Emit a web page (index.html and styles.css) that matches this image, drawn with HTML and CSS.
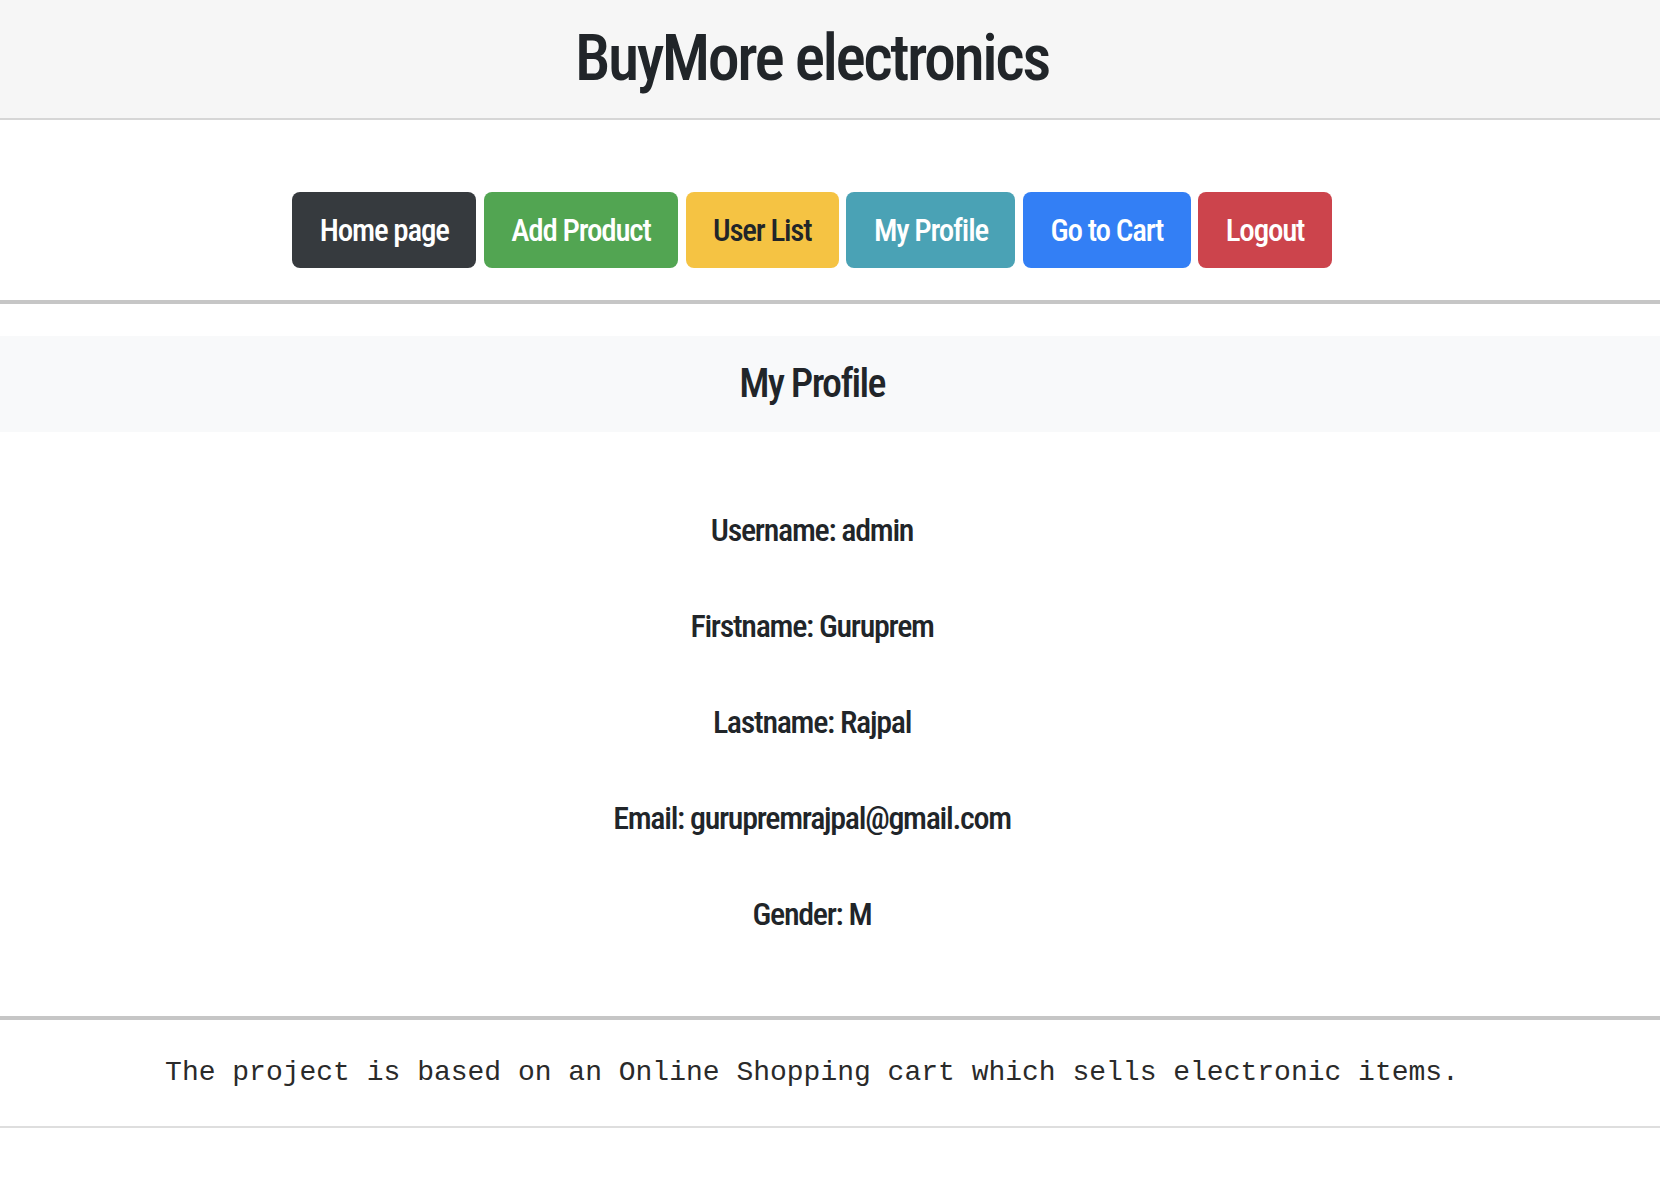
FILE: index.html
```html
<!DOCTYPE html>
<html lang="en">
<head>
<meta charset="utf-8">
<title>BuyMore electronics - My Profile</title>
<link rel="stylesheet" href="styles.css">
</head>
<body>
  <header class="site-header">
    <h1 class="site-title centered">BuyMore electronics</h1>
  </header>

  <nav class="main-nav centered">
    <a class="btn btn-dark" href="#">Home page</a>
    <a class="btn btn-success" href="#">Add Product</a>
    <a class="btn btn-warning" href="#">User List</a>
    <a class="btn btn-info" href="#">My Profile</a>
    <a class="btn btn-primary" href="#">Go to Cart</a>
    <a class="btn btn-danger" href="#">Logout</a>
  </nav>

  <hr class="rule">

  <section class="page-heading">
    <h2 class="page-title centered">My Profile</h2>
  </section>

  <main class="profile centered">
    <p class="profile-line">Username: admin</p>
    <p class="profile-line">Firstname: Guruprem</p>
    <p class="profile-line">Lastname: Rajpal</p>
    <p class="profile-line">Email: gurupremrajpal@gmail.com</p>
    <p class="profile-line">Gender: M</p>
  </main>

  <hr class="rule rule-bottom">

  <footer class="site-footer">
    <p class="footer-text centered">The project is based on an Online Shopping cart which sells electronic items.</p>
  </footer>
</body>
</html>
```

FILE: styles.css
```css
html, body {
  margin: 0;
  padding: 0;
  background: #ffffff;
}

body {
  font-family: "Roboto Condensed", "DejaVu Sans Condensed", "DejaVu Sans", sans-serif;
  font-stretch: condensed;
  font-weight: 500;
  color: #212529;
}

.centered {
  text-align: center;
  padding-right: 36px;
}

.site-header {
  background: #f6f6f6;
  border-bottom: 2px solid #d6d6d6;
  height: 118px;
}

.site-title {
  margin: 0;
  font-size: 64px;
  font-weight: 500;
  line-height: 118px;
  letter-spacing: -2.5px;
}

.main-nav {
  display: flex;
  justify-content: center;
  gap: 7.5px;
  padding-top: 72px;
}

.btn {
  display: inline-flex;
  align-items: center;
  height: 76px;
  padding: 0 27.5px;
  border-radius: 8px;
  font-size: 31px;
  letter-spacing: -1.2px;
  color: #ffffff;
  text-decoration: none;
  box-sizing: border-box;
}

.btn-dark { background: #363a3e; }
.btn-success { background: #52a552; }
.btn-warning { background: #f5c343; color: #212529; }
.btn-info { background: #4aa2b5; }
.btn-primary { background: #337ff5; }
.btn-danger { background: #cc444c; }

.rule {
  border: 0;
  height: 4px;
  background: #c6c6c6;
  margin: 32px 0 0;
}

.page-heading {
  background: #f8f9fa;
  height: 96px;
  margin-top: 32px;
}

.page-title {
  margin: 0;
  font-size: 40px;
  font-weight: 500;
  letter-spacing: -1.7px;
  line-height: 96px;
}

.profile {
  display: flex;
  flex-direction: column;
  align-items: center;
  padding-top: 50px;
  padding-bottom: 54px;
}

.profile-line {
  margin: 0;
  font-size: 32px;
  letter-spacing: -1.3px;
  line-height: 96px;
}

.rule-bottom {
  margin-top: 0;
}

.site-footer {
  border-bottom: 2px solid #dedede;
}

.footer-text {
  margin: 0;
  font-family: "Liberation Mono", "Courier New", monospace;
  font-weight: normal;
  font-stretch: normal;
  font-size: 28px;
  line-height: 106px;
  color: #2a2a2a;
}
```
